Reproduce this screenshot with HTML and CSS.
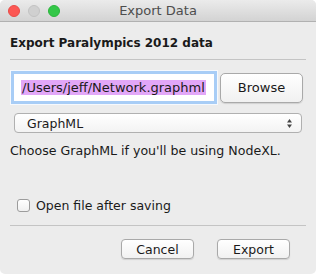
FILE: index.html
```html
<!DOCTYPE html>
<html lang="en">
<head>
  <meta charset="UTF-8" />
  <title>Export Data</title>
  <link rel="stylesheet" href="styles.css">
</head>
<body>
  <div class="window">
    <div class="titlebar">
      <div class="lights">
        <span class="light red"></span>
        <span class="light gray"></span>
        <span class="light green"></span>
      </div>
      <div class="title">Export Data</div>
      <div></div>
    </div>

    <div class="content">
      <h1 class="heading">Export Paralympics 2012 data</h1>
      <hr class="rule" />

      <div class="file-row">
        <div class="path-field"><span class="selected">/Users/jeff/Network.graphml</span></div>
        <button class="btn browse">Browse</button>
      </div>

      <div class="select">
        <span>GraphML</span>
        <svg class="arrows" width="7" height="11" viewBox="0 0 7 11">
          <path d="M3.5 1 L6 4.5 L1 4.5 Z" fill="#444" />
          <path d="M3.5 10 L6 6.5 L1 6.5 Z" fill="#444" />
        </svg>
      </div>

      <p class="hint">Choose GraphML if you'll be using NodeXL.</p>

      <label class="check">
        <span class="box"></span>
        Open file after saving
      </label>
      <hr class="rule" />

      <div class="actions">
        <button class="btn small">Cancel</button>
        <button class="btn small">Export</button>
      </div>
    </div>
  </div>
</body>
</html>
```

FILE: styles.css
```css
body {
  margin: 0;
  background: #ffffff;
  font-family: 'DejaVu Sans', 'Liberation Sans', sans-serif;
  color: #1a1a1a;
}
.window {
  width: 316px;
  height: 274px;
  background: #ececec;
  border-radius: 5px;
  overflow: hidden;
  display: flex;
  flex-direction: column;
}
.titlebar {
  height: 21px;
  background: linear-gradient(#ebebeb, #d3d3d3);
  border-bottom: 1px solid #b1b1b1;
  display: grid;
  grid-template-columns: 1fr auto 1fr;
  align-items: center;
}
.lights {
  display: flex;
  gap: 8px;
  padding-left: 8px;
}
.light {
  width: 12px;
  height: 12px;
  border-radius: 50%;
  box-sizing: border-box;
}
.red {
  background: #fc5753;
  border: 1px solid #e84b47;
}
.gray {
  background: #d0d0d0;
  border: 1px solid #c2c2c2;
}
.green {
  background: #33c748;
  border: 1px solid #2bb53c;
}
.title {
  font-size: 13px;
  color: #4d4d4d;
}
.content {
  padding: 0 10px;
  display: flex;
  flex-direction: column;
}
.heading {
  margin: 13px 0 0;
  font-size: 12px;
  font-weight: bold;
  height: 16px;
  line-height: 16px;
}
.rule {
  margin: 0;
  border: none;
  border-top: 1px solid #c4c4c4;
}
.content > .rule:first-of-type {
  margin-top: 8px;
}
.file-row {
  display: flex;
  align-items: center;
  gap: 3px;
  margin-top: 11px;
  padding-left: 1px;
}
.path-field {
  width: 206px;
  height: 33px;
  box-sizing: border-box;
  border: 3px solid #a8cdf6;
  box-shadow: 0 0 0 1px #f6f9fd;
  background: #ffffff;
  display: flex;
  align-items: center;
  padding-left: 7px;
}
.selected {
  background: #e2a7f8;
  font-size: 13px;
  line-height: 15px;
  padding: 0 1px;
}
.btn {
  font-family: inherit;
  font-size: 12.5px;
  color: #1a1a1a;
  background: linear-gradient(#ffffff, #f1f1f1);
  border: 1px solid #a9a9a9;
  border-radius: 5px;
  box-shadow: 0 1px 1px rgba(0, 0, 0, 0.12);
  padding: 0;
}
.browse {
  width: 83px;
  height: 30px;
  font-size: 13px;
}
.select {
  margin: 9px 4px 0;
  height: 20px;
  box-sizing: border-box;
  border: 1px solid #b0b0b0;
  border-radius: 4px;
  background: linear-gradient(#ffffff, #f3f3f3);
  display: flex;
  align-items: center;
  justify-content: space-between;
  padding: 0 8px 0 12px;
  font-size: 12.5px;
}
.hint {
  margin: 10px 0 0;
  font-size: 12.6px;
  line-height: 16px;
}
.check {
  margin: 38px 0 0 7px;
  display: flex;
  align-items: center;
  gap: 6px;
  font-size: 12.5px;
  height: 16px;
}
.box {
  width: 13px;
  height: 13px;
  box-sizing: border-box;
  border: 1px solid #9c9c9c;
  border-radius: 3px;
  background: linear-gradient(#ffffff, #f0f0f0);
}
.check + .rule {
  margin-top: 12px;
}
.actions {
  display: flex;
  justify-content: flex-end;
  gap: 23px;
  margin: 13px 16px 0 0;
}
.small {
  width: 73px;
  height: 20px;
  border-radius: 4px;
}
```
